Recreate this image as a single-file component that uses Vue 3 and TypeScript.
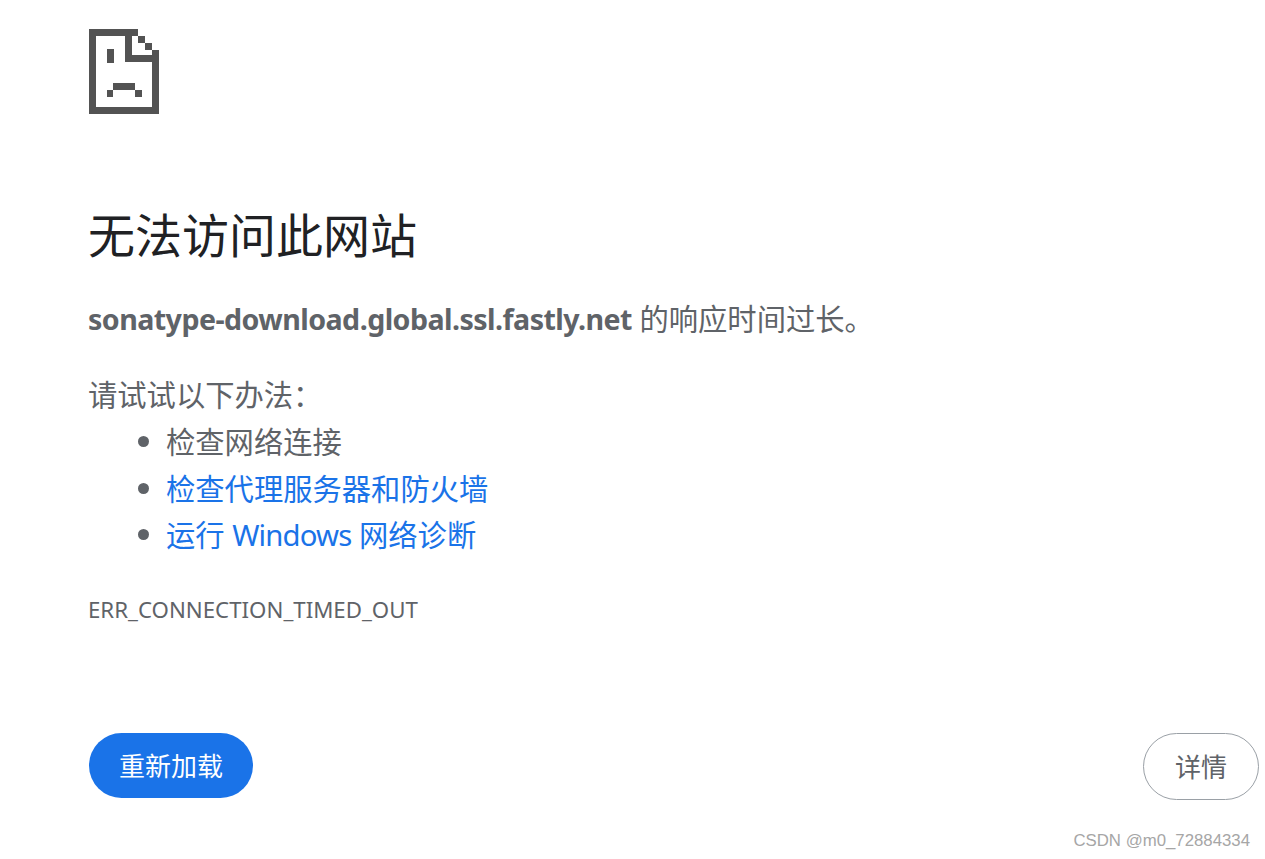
<script setup lang="ts">
const suggestions = [
  { text: "检查网络连接", link: false },
  { text: "检查代理服务器和防火墙", link: true },
];
</script>

<template>
  <div class="page">
    <svg class="sad-icon" width="70" height="85" viewBox="0 0 70 85" fill="#535353">
      <path d="M0 0H49V7H7V78H63V21H70V85H0Z" />
      <path d="M36 0H43V26H70V33H36Z" />
      <path d="M49 7H56V14H49ZM56 14H63V21H56Z" />
      <path d="M18 20H25V34H18Z" />
      <path d="M24 54H46V61H24ZM18 61H24V68H18ZM46 61H53V68H46Z" />
    </svg>
    <div class="copy">
      <h1 class="title">无法访问此网站</h1>
      <p class="summary"><strong>sonatype-download.global.ssl.fastly.net</strong> 的响应时间过长。</p>
      <p class="try">请试试以下办法：</p>
      <ul class="tips">
        <li v-for="item in suggestions" :key="item.text">
          <a v-if="item.link" class="tip-link">{{ item.text }}</a>
          <template v-else>{{ item.text }}</template>
        </li>
        <li><a class="tip-link">运行 <span class="latin">Windows</span> 网络诊断</a></li>
      </ul>
      <div class="code">ERR_CONNECTION_TIMED_OUT</div>
    </div>
    <div class="actions">
      <button class="reload">重新加载</button>
      <button class="details">详情</button>
    </div>
    <div class="watermark">CSDN @m0_72884334</div>
  </div>
</template>

<style scoped>
.page {
  box-sizing: border-box;
  height: 859px;
  padding: 29px 6px 0 89px;
  overflow: hidden;
  font-family: "Noto Sans", "Noto Sans CJK SC", sans-serif;
  color: #5f6368;
  background: #fff;
}
.sad-icon {
  display: block;
}
.copy {
  margin-left: -1px;
}
.title {
  margin: 91px 0 0;
  font-size: 47px;
  line-height: 60px;
  font-weight: 400;
  color: #202124;
}
.summary {
  margin: 31px 0 0;
  font-size: 29.3px;
  line-height: 46px;
}
.summary strong {
  font-size: 28.6px;
  font-weight: 700;
  letter-spacing: -0.55px;
}
.try {
  margin: 30px 0 0;
  font-size: 29.3px;
  line-height: 46px;
}
.tips {
  margin: 1px 0 0;
  padding: 0 0 0 78px;
  list-style: none;
  font-size: 29.3px;
  line-height: 46.5px;
}
.tips li {
  position: relative;
}
.tips li::before {
  content: "";
  position: absolute;
  left: -28px;
  top: 17px;
  width: 11px;
  height: 11px;
  border-radius: 50%;
  background: #5f6368;
}
.tip-link {
  color: #1a73e8;
}
.latin {
  letter-spacing: -0.85px;
}
.code {
  margin-top: 36px;
  font-size: 22.25px;
  line-height: 30px;
}
.actions {
  display: flex;
  justify-content: space-between;
  align-items: flex-start;
  margin-top: 108px;
}
.actions button {
  font-family: inherit;
  font-size: 26px;
  border-radius: 34px;
  padding: 0;
  cursor: pointer;
}
.reload {
  width: 164px;
  height: 65px;
  border: none;
  background: #1a73e8;
  color: #fff;
}
.details {
  width: 116px;
  height: 67px;
  border: 1px solid #9aa0a6;
  background: #fff;
  color: #5f6368;
}
.watermark {
  position: absolute;
  right: 15px;
  top: 831px;
  font-family: "Liberation Sans", sans-serif;
  font-size: 16.8px;
  line-height: 20px;
  color: #a6a6a6;
}
</style>
